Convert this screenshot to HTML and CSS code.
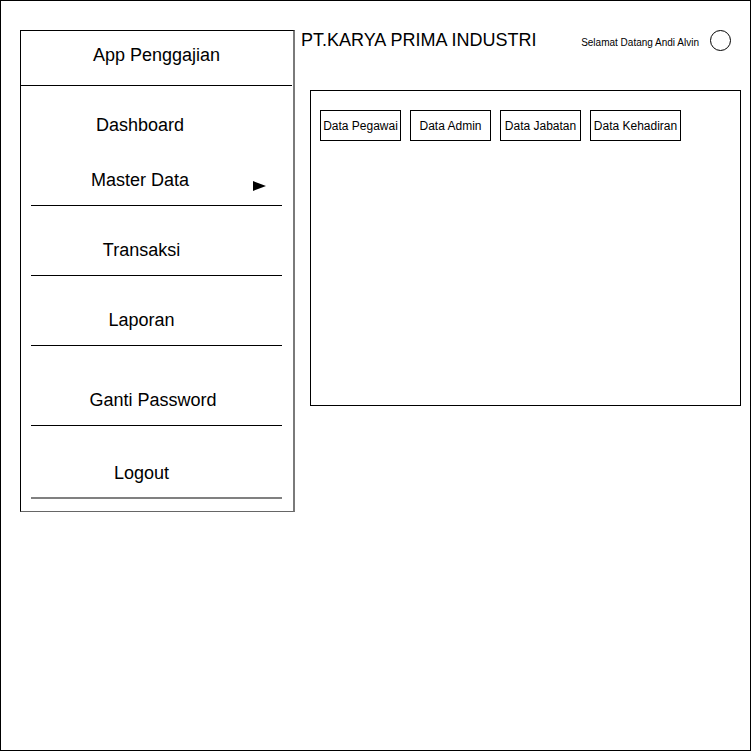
FILE: index.html
```html
<!DOCTYPE html>
<html lang="id">
<head>
    <meta charset="UTF-8">
    <meta name="viewport" content="width=device-width, initial-scale=1.0">
    <title>App Penggajian - PT.KARYA PRIMA INDUSTRI</title>
    <link rel="stylesheet" href="styles.css">
</head>
<body>
    <div class="frame">
        <aside class="sidebar">
            <div class="brand">App Penggajian</div>

            <div class="menu-item dashboard">Dashboard</div>

            <div class="menu-item master lined">
                <span class="label">Master Data</span>
                <svg class="arrow" width="13" height="10" viewBox="0 0 13 10">
                    <polygon points="0,0 13,5 0,10" fill="#000"/>
                </svg>
            </div>

            <div class="menu-item lined gap-md">Transaksi</div>
            <div class="menu-item lined gap-md">Laporan</div>
            <div class="menu-item lined gap-lg wide">Ganti Password</div>
            <div class="menu-item last logout">Logout</div>
        </aside>

        <main class="main">
            <header class="topbar">
                <h1 class="company">PT.KARYA PRIMA INDUSTRI</h1>
                <div class="user">
                    <span class="welcome">Selamat Datang Andi Alvin</span>
                    <span class="avatar"></span>
                </div>
            </header>

            <section class="panel">
                <div class="tabs">
                    <div class="tab">Data Pegawai</div>
                    <div class="tab">Data Admin</div>
                    <div class="tab">Data Jabatan</div>
                    <div class="tab tab-wide">Data Kehadiran</div>
                </div>
            </section>
        </main>
    </div>
</body>
</html>
```

FILE: styles.css
```css
* {
    margin: 0;
    padding: 0;
    box-sizing: border-box;
}

body {
    font-family: 'Liberation Sans', Arial, sans-serif;
    color: #000;
    background: #fff;
}

.frame {
    width: 751px;
    height: 751px;
    border: 1px solid #000;
    padding: 29px 0 0 19px;
    display: flex;
    align-items: flex-start;
}

/* sidebar */
.sidebar {
    width: 275px;
    height: 482px;
    border-top: 1px solid #000;
    border-left: 1px solid #000;
    border-right: 2px solid #7a7a7a;
    border-bottom: 1px solid #666;
    display: flex;
    flex-direction: column;
    flex-shrink: 0;
}

.brand {
    height: 55px;
    line-height: 48px;
    border-bottom: 1px solid #000;
    margin-right: 1px;
    text-align: center;
    font-size: 18px;
}

.menu-item {
    height: 50px;
    line-height: 50px;
    margin: 0 11px 0 10px;
    padding-right: 30px;
    text-align: center;
    font-size: 18px;
}

.menu-item.lined {
    height: 51px;
    border-bottom: 1px solid #000;
}

.dashboard {
    margin-top: 14px;
    padding-right: 33px;
}

.master {
    margin-top: 5px;
    display: flex;
    align-items: center;
    padding-right: 16px;
}

.master .label {
    flex: 1;
    padding-right: 1px;
}

.arrow {
    margin-left: 3px;
    margin-top: 12px;
}

.gap-md {
    margin-top: 19px;
}

.gap-lg {
    margin-top: 29px;
}

.wide {
    padding-right: 7px;
}

.logout {
    margin-top: 21px;
    height: 52px;
    line-height: 52px;
    border-bottom: 2px solid #808080;
}

/* main area */
.main {
    flex: 1;
    display: flex;
    flex-direction: column;
}

.topbar {
    height: 20px;
    display: flex;
    align-items: center;
    justify-content: space-between;
    padding: 0 19px 0 6px;
}

.company {
    font-size: 18px;
    font-weight: normal;
    line-height: 20px;
}

.user {
    display: flex;
    align-items: center;
}

.welcome {
    font-size: 10px;
    margin-top: 4px;
    margin-right: 11px;
}

.avatar {
    width: 21px;
    height: 21px;
    border: 1px solid #000;
    border-radius: 50%;
}

.panel {
    width: 431px;
    height: 316px;
    margin: 40px 0 0 15px;
    border: 1px solid #000;
    padding: 19px 0 0 9px;
}

.tabs {
    display: flex;
    gap: 9px;
}

.tab {
    width: 81px;
    height: 31px;
    border: 1px solid #000;
    font-size: 12px;
    line-height: 31px;
    text-align: center;
    white-space: nowrap;
}

.tab-wide {
    width: 91px;
}
```
